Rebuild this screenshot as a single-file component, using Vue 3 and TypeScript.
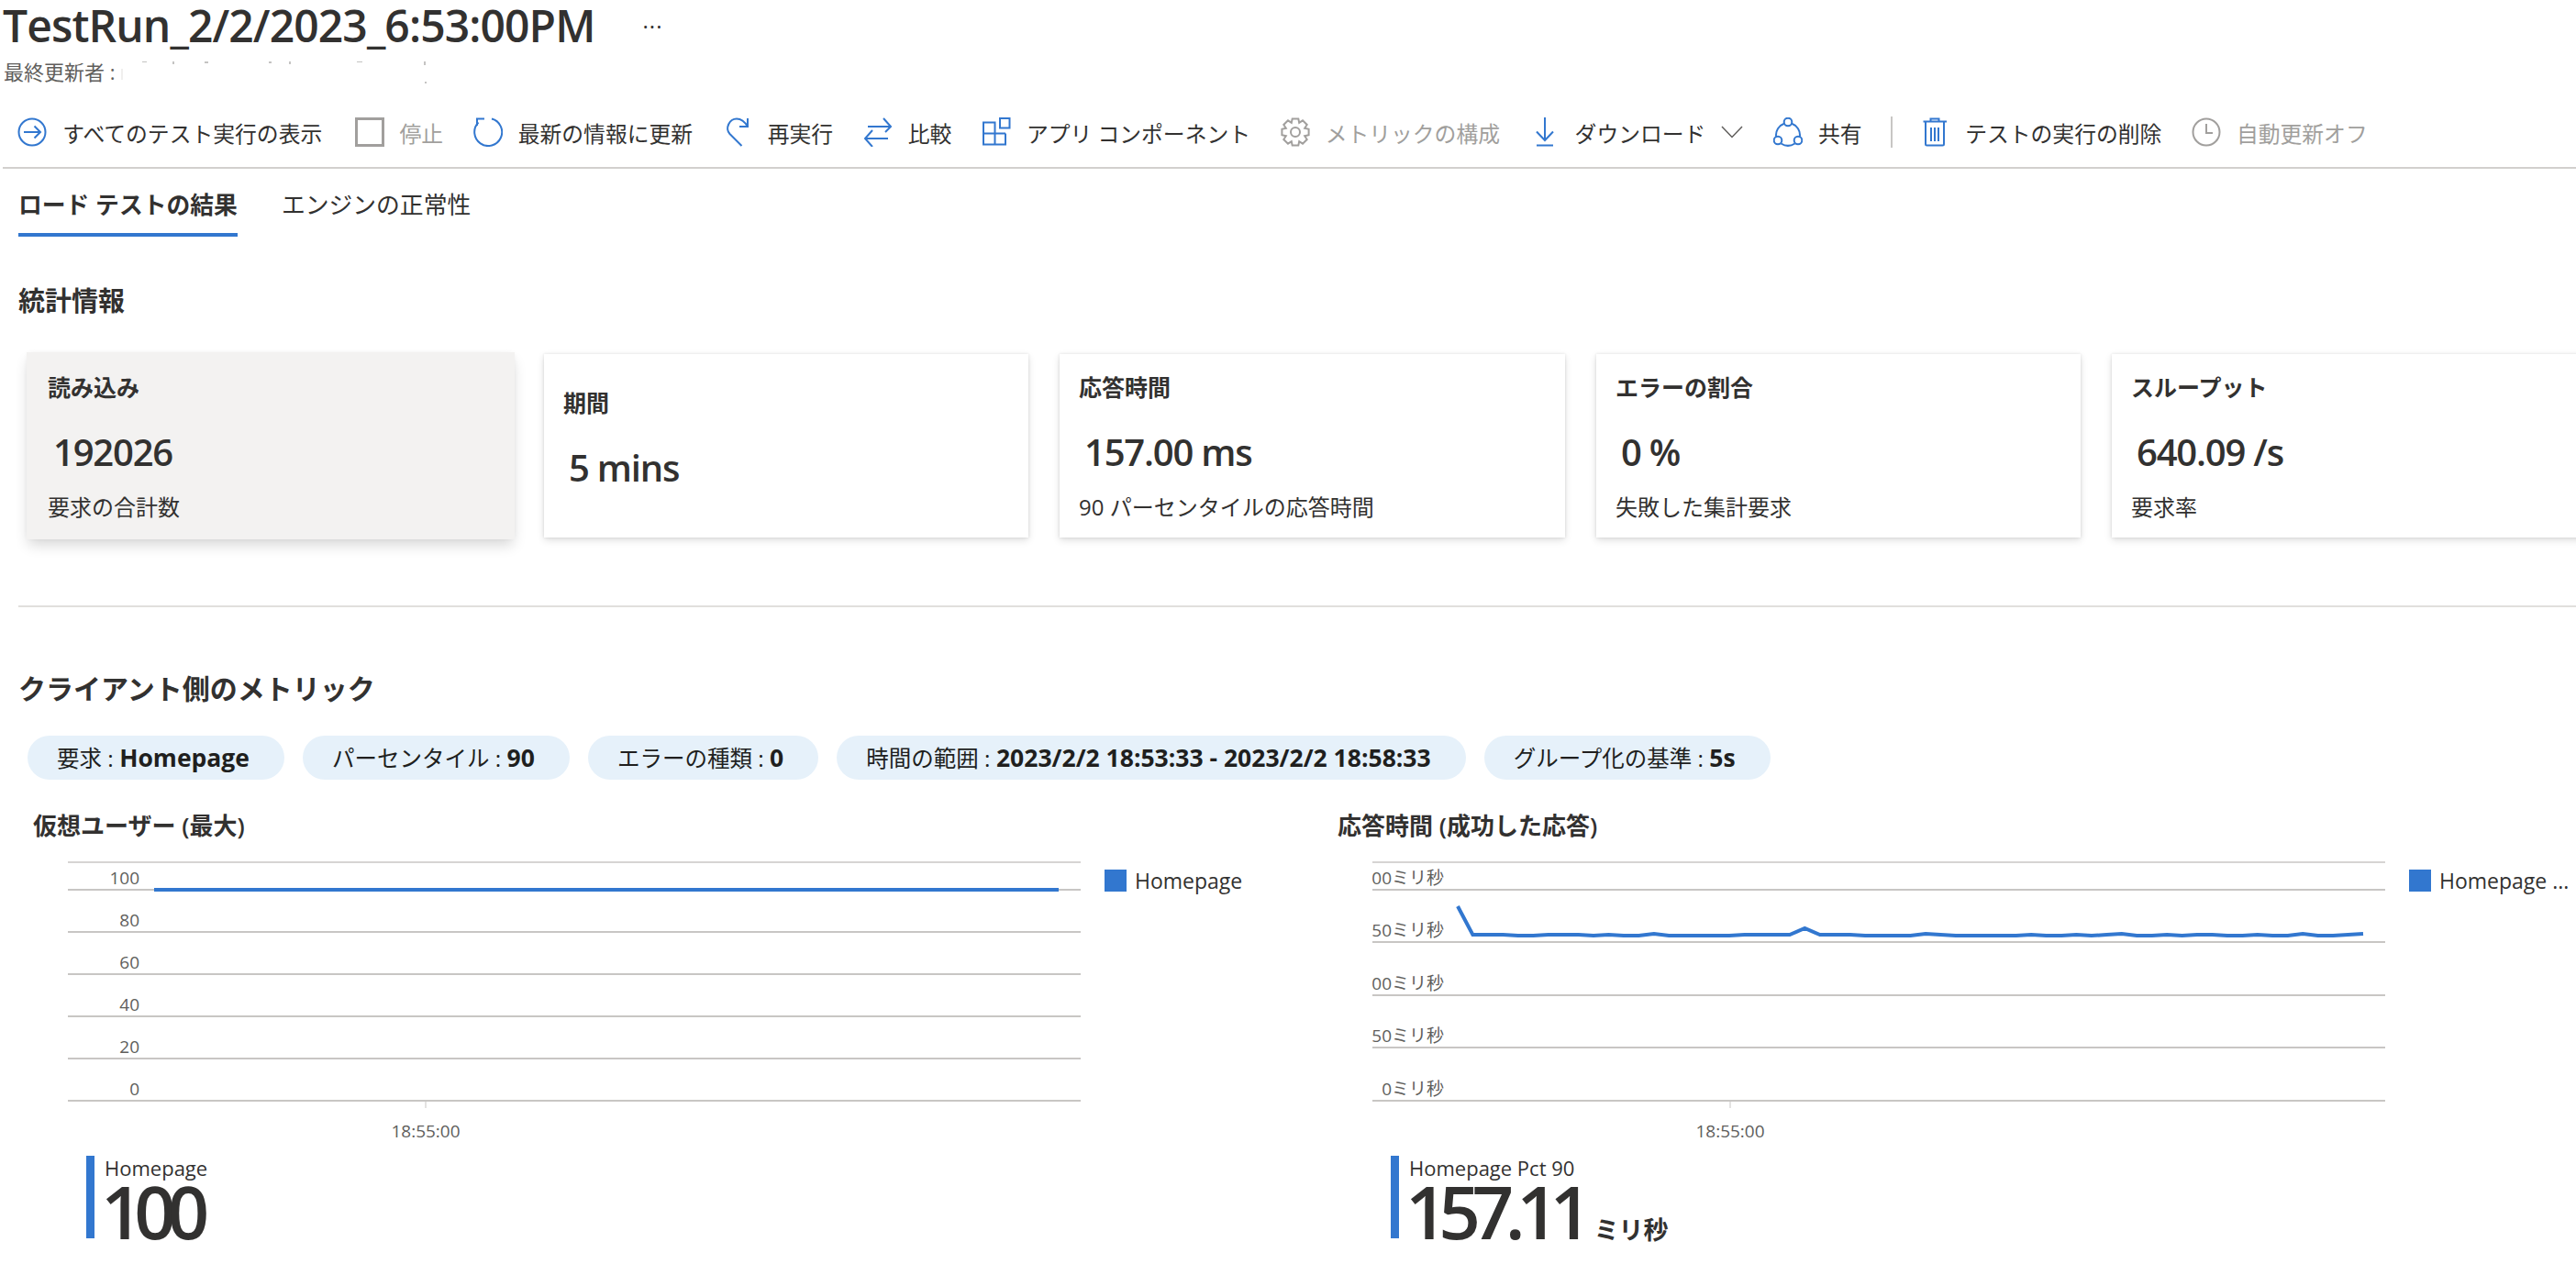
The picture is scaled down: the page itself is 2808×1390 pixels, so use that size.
<template>
  <div class="page">
    <header class="head">
      <div class="title-row">
        <h1 class="title">TestRun_2/2/2023_6:53:00PM</h1>
        <span class="more">···</span>
      </div>
      <div class="meta">
        <span>最終更新者 :</span>
        <svg class="scraps" width="340" height="26" viewBox="0 0 340 26">
          <path d="M2 8v12" stroke="#e1dfdd" />
          <path d="M24 0h5M58 0v3M92 1h4M162 1h3M185 0v3M258 0h6M332 0v4M333 22v2" stroke="#8a8886" />
        </svg>
      </div>
    </header>

    <nav class="toolbar">
      <template v-for="item in toolbar" :key="item.label">
        <span v-if="item.divider" class="divider"></span>
        <div class="tool" :class="{ off: item.off }">
          <svg class="icon" width="32" height="32" viewBox="0 0 32 32" v-html="item.icon"></svg>
          <span>{{ item.label }}</span>
          <svg v-if="item.menu" class="chevron" width="24" height="14" viewBox="0 0 24 14">
            <path d="M1 1l11 11.5L23 1" />
          </svg>
        </div>
      </template>
    </nav>

    <div class="tabs">
      <div class="tab active">ロード テストの結果</div>
      <div class="tab">エンジンの正常性</div>
    </div>

    <h2 class="section stats">統計情報</h2>

    <div class="cards">
      <div v-for="card in cards" :key="card.title" class="card" :class="{ hover: card.hover, wide: card.wide }">
        <div class="card-title">{{ card.title }}</div>
        <div class="card-value">{{ card.value }}</div>
        <div v-if="card.sub" class="card-sub">{{ card.sub }}</div>
      </div>
    </div>

    <div class="rule"></div>

    <h2 class="section client">クライアント側のメトリック</h2>

    <div class="pills">
      <div v-for="pill in pills" :key="pill.name" class="pill">
        {{ pill.name }} : <b>{{ pill.value }}</b>
      </div>
    </div>

    <div class="charts">
      <section v-for="chart in charts" :key="chart.title" class="panel">
        <div class="chart-title">{{ chart.title }}</div>
        <div class="plot-row">
          <svg class="plot" width="1178" height="320" viewBox="0 0 1178 320">
            <line x1="74" x2="1178" y1="10" y2="10" class="grid top" />
            <g v-for="tick in chart.ticks" :key="tick.y">
              <line x1="74" x2="1178" :y1="tick.y" :y2="tick.y" class="grid" />
              <text x="152" :y="tick.y - 6" text-anchor="end" class="axis">{{ tick.label }}</text>
            </g>
            <polyline :points="chart.points" class="series" />
            <line x1="464" x2="464" y1="271" y2="278" class="tick" />
            <text x="464" y="310" text-anchor="middle" class="axis">18:55:00</text>
          </svg>
          <div class="legend">
            <i></i>
            <span>{{ chart.legend }}</span>
          </div>
        </div>
        <div class="summary">
          <div class="summary-label">{{ chart.summary }}</div>
          <div class="summary-value">
            {{ chart.total }}<small v-if="chart.unit">{{ chart.unit }}</small>
          </div>
        </div>
      </section>
    </div>
  </div>
</template>

<script setup lang="ts">
// 歯車アイコンのパスを計算する
const gearPath = () => {
  const teeth = 8
  const pts: string[] = []
  for (let i = 0; i < teeth; i++) {
    const a = (i / teeth) * Math.PI * 2 - Math.PI / 2
    const step = (Math.PI * 2) / teeth
    const spots: [number, number][] = [
      [-0.5, 11],
      [-0.28, 15],
      [0.28, 15],
      [0.5, 11],
    ]
    for (const [d, r] of spots) {
      const t = a + d * step
      pts.push(`${(16 + Math.cos(t) * r).toFixed(1)} ${(16 + Math.sin(t) * r).toFixed(1)}`)
    }
  }
  return `M${pts.join('L')}Z`
}

const toolbar = [
  {
    label: 'すべてのテスト実行の表示',
    icon: '<circle cx="16" cy="16" r="14.5"/><path d="M7 16h18M18.5 9.5L25 16l-6.5 6.5"/>',
  },
  { label: '停止', off: true, icon: '<rect x="1.5" y="1.5" width="29" height="29" stroke-width="3"/>' },
  {
    label: '最新の情報に更新',
    icon: '<path d="M20 1.5A15 15 0 1 1 5.5 5.5M4 9V1.5h8"/>',
  },
  {
    label: '再実行',
    icon: '<path d="M20.5 31L7.5 18C2 12 7 1.5 15 1.5c5 0 9 3.5 12 8.5M27 1v9h-9"/>',
  },
  {
    label: '比較',
    icon: '<path d="M5 10h24M22 1l8 9-6 6M3 23h24M10 14l-8 9 8 9"/>',
  },
  {
    label: 'アプリ コンポーネント',
    icon: '<path d="M2 5.5h12.500v24H2zM2 17.500h24M14.500 29.500H26V17.500"/><rect x="20" y="1" width="10.500" height="10.500"/>',
  },
  { label: 'メトリックの構成', off: true, icon: `<path d="${gearPath()}"/><circle cx="16" cy="16" r="5"/>` },
  {
    label: 'ダウンロード',
    menu: true,
    icon: '<path d="M16 0v25M7 15.500l9 9.500 9-9.500M7 30.500h18"/>',
  },
  {
    label: '共有',
    icon: '<circle cx="16" cy="5" r="4.300"/><circle cx="5" cy="25" r="4.300"/><circle cx="27" cy="25" r="4.300"/><path d="M11.800 6.800A13.500 13.500 0 0 0 3 20.800M20.200 6.800A13.500 13.500 0 0 1 29 20.800M8.500 28.500a14 14 0 0 0 15 0"/>',
  },
  {
    label: 'テストの実行の削除',
    divider: true,
    icon: '<path d="M3.500 4.500H29M11.500 4V1.500h9V4M6 4.500V29a1.500 1.500 0 0 0 1.500 1.500h17A1.500 1.500 0 0 0 26 29V4.500M12 11v15M16 11v15M20 11v15"/>',
  },
  { label: '自動更新オフ', off: true, icon: '<circle cx="16" cy="16" r="14.500"/><path d="M16 7v10h7"/>' },
]

const cards = [
  { title: '読み込み', value: '192026', sub: '要求の合計数', hover: true },
  { title: '期間', value: '5 mins' },
  { title: '応答時間', value: '157.00 ms', sub: '90 パーセンタイルの応答時間', wide: true },
  { title: 'エラーの割合', value: '0 %', sub: '失敗した集計要求' },
  { title: 'スループット', value: '640.09 /s', sub: '要求率' },
]

const pills = [
  { name: '要求', value: 'Homepage' },
  { name: 'パーセンタイル', value: '90' },
  { name: 'エラーの種類', value: '0' },
  { name: '時間の範囲', value: '2023/2/2 18:53:33 - 2023/2/2 18:58:33' },
  { name: 'グループ化の基準', value: '5s' },
]

// 応答時間の折れ線（5 秒ごと、61 点）。プロット内の y 座標
const latency = [
  58, 89, 89, 89, 90, 90, 89, 89, 89, 90, 89, 90, 90, 88, 90, 90, 90, 90, 90, 89, 89, 89, 89, 82, 89, 89, 89, 90, 90, 90,
  90, 88, 89, 90, 90, 90, 90, 90, 89, 90, 90, 89, 90, 89, 88, 90, 90, 89, 90, 89, 89, 90, 90, 89, 90, 90, 88, 90, 90, 89, 88,
]
const latencyPoints = latency.map((y, i) => `${(167 + i * 16.45).toFixed(1)},${y}`).join(' ')

const charts = [
  {
    title: '仮想ユーザー (最大)',
    legend: 'Homepage',
    summary: 'Homepage',
    total: '100',
    unit: '',
    points: '168,40 1154,40',
    ticks: [
      { y: 40, label: '100' },
      { y: 86, label: '80' },
      { y: 132, label: '60' },
      { y: 178, label: '40' },
      { y: 224, label: '20' },
      { y: 270, label: '0' },
    ],
  },
  {
    title: '応答時間 (成功した応答)',
    legend: 'Homepage ...',
    summary: 'Homepage Pct 90',
    total: '157.11',
    unit: 'ミリ秒',
    points: latencyPoints,
    ticks: [
      { y: 40, label: '00ミリ秒' },
      { y: 97, label: '50ミリ秒' },
      { y: 155, label: '00ミリ秒' },
      { y: 212, label: '50ミリ秒' },
      { y: 270, label: '0ミリ秒' },
    ],
  },
]
</script>

<style>
html,
body {
  overflow: hidden;
  background: #fff;
}
</style>

<style scoped>
.page {
  width: 2808px;
  height: 1390px;
  overflow: hidden;
  background: #fff;
  color: #323130;
  font-family: "Open Sans", "Noto Sans CJK JP", sans-serif;
}
.title-row {
  display: flex;
  align-items: center;
  height: 56px;
  padding-left: 3px;
}
.title {
  margin: 0;
  font-size: 48px;
  font-weight: 600;
  line-height: 56px;
  letter-spacing: -0.9px;
}
.more {
  margin-left: 52px;
  font-size: 24px;
  letter-spacing: 1px;
}
.meta {
  display: flex;
  align-items: center;
  height: 32px;
  margin-top: 5px;
  padding-left: 4px;
  font-size: 22px;
  color: #605e5c;
}
.scraps {
  margin: 6px 0 0 5px;
  fill: none;
}
.toolbar {
  display: flex;
  align-items: center;
  height: 76px;
  margin: 7px 0 0 3px;
  padding-top: 6px;
  border-bottom: 2px solid #d2d0ce;
  font-size: 23.800px;
}
.tool {
  display: flex;
  align-items: center;
  gap: 17px;
  padding: 0 16.300px;
  white-space: nowrap;
}
.tool:first-child {
  padding-right: 19px;
}
.tool.off {
  color: #a19f9d;
}
.icon {
  flex: none;
  fill: none;
  stroke: #3277cf;
  stroke-width: 2;
}
.tool.off .icon {
  stroke: #a19f9d;
}
.chevron {
  fill: none;
  stroke: #605e5c;
  stroke-width: 1.500;
}
.divider {
  width: 2px;
  height: 34px;
  margin: 0 14px 0 15px;
  background: #c8c6c4;
}
.tabs {
  display: flex;
  gap: 48px;
  padding-left: 20px;
}
.tab {
  padding: 20px 0 12px;
  border-bottom: 4px solid transparent;
  font-size: 25.800px;
  line-height: 38px;
}
.tab.active {
  border-bottom-color: #3277cf;
  font-weight: 600;
}
.section {
  margin: 0;
  padding-left: 20px;
  font-size: 29px;
  font-weight: 600;
  line-height: 40px;
}
.stats {
  margin-top: 50px;
}
.client {
  margin-top: 69px;
  font-size: 30px;
}
.cards {
  display: flex;
  gap: 34px;
  margin-top: 38px;
  padding-left: 31px;
}
.card {
  display: flex;
  flex: none;
  flex-direction: column;
  justify-content: center;
  box-sizing: border-box;
  width: 528px;
  height: 200px;
  padding: 1px 0 0 21px;
  background: #fff;
  box-shadow: 0 3px 8px rgba(0, 0, 0, 0.13), 0 0 3px rgba(0, 0, 0, 0.11);
}
.card.wide {
  width: 551px;
}
.card.hover {
  background: #f3f2f1;
  box-shadow: 0 0 0 2px #f3f2f1, 0 8px 14px rgba(0, 0, 0, 0.16), 0 0 6px rgba(0, 0, 0, 0.08);
}
.card-title {
  font-size: 25px;
  font-weight: 600;
  line-height: 34px;
}
.card-value {
  margin-top: 29px;
  padding-left: 6px;
  font-size: 40px;
  font-weight: 600;
  line-height: 50px;
  letter-spacing: -1.200px;
}
.card-value:last-child {
  margin-bottom: 16px;
}
.card-sub {
  margin-top: 20px;
  font-size: 24px;
  line-height: 30px;
}
.rule {
  height: 2px;
  margin: 74px 0 0 20px;
  background: #e1dfdd;
}
.pills {
  display: flex;
  gap: 20px;
  margin-top: 31px;
  padding-left: 30px;
}
.pill {
  height: 48px;
  padding: 0 38px 0 32px;
  border-radius: 24px;
  background: #e6f1fa;
  color: #201f1e;
  font-size: 24.500px;
  line-height: 48px;
  white-space: nowrap;
}
.pill b {
  font-size: 26.500px;
  font-weight: 700;
}
.charts {
  display: grid;
  grid-template-columns: 1422px 1386px;
  margin-top: 30px;
}
.chart-title {
  padding-left: 36px;
  font-size: 26px;
  font-weight: 600;
  line-height: 40px;
}
.plot-row {
  display: flex;
  margin-top: 10px;
}
.plot {
  flex: none;
}
.grid {
  stroke: #c8c6c4;
  stroke-width: 2;
}
.grid.top {
  stroke-width: 1.500;
}
.axis {
  fill: #605e5c;
  font-size: 19px;
}
.series {
  fill: none;
  stroke: #3277cf;
  stroke-width: 4;
}
.tick {
  stroke: #c8c6c4;
}
.legend {
  display: flex;
  align-items: center;
  gap: 9px;
  height: 24px;
  margin: 18px 0 0 26px;
  font-size: 23px;
  white-space: nowrap;
}
.legend i {
  width: 24px;
  height: 24px;
  background: #3277cf;
}
.summary {
  height: 90px;
  margin: 10px 0 0 94px;
  padding-left: 11px;
  border-left: 9px solid #3277cf;
}
.summary-label {
  font-size: 22px;
  line-height: 26px;
}
.summary-value {
  margin-left: -4px;
  font-size: 80px;
  font-weight: 600;
  line-height: 68px;
  letter-spacing: -9.500px;
}
.summary-value small {
  margin-left: 12px;
  font-size: 27px;
  letter-spacing: 0;
}
</style>
